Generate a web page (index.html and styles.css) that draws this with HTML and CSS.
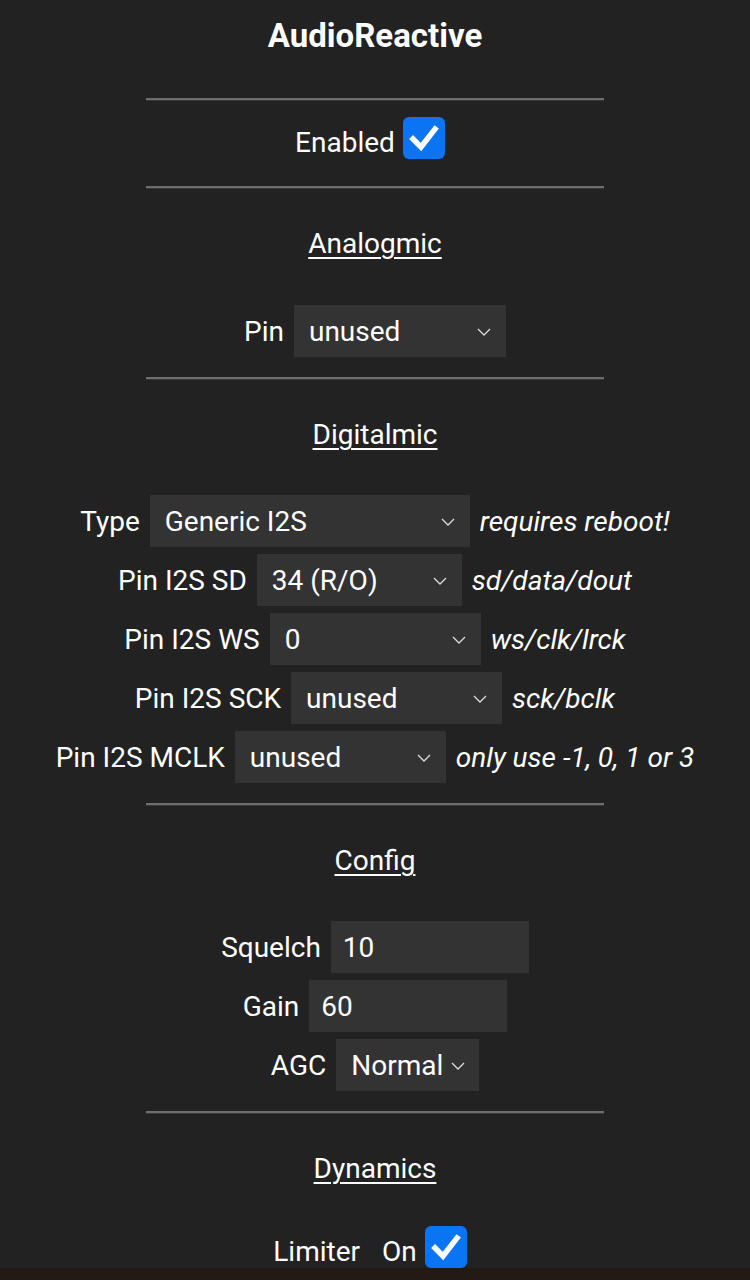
FILE: index.html
```html
<!DOCTYPE html>
<html>
<head>
<meta charset="utf-8">
<link rel="stylesheet" href="styles.css">
</head>
<body>
<div class="page">
  <h2 class="title">AudioReactive</h2>
  <hr class="sep">
  <div class="row row-check">
    <span class="label clabel">Enabled</span>
    <span class="check"><svg viewBox="0 0 42 42" width="42" height="42"><path d="M10 22 L18 30 L32 12" fill="none" stroke="#fff" stroke-width="5.5" stroke-linecap="square" stroke-linejoin="miter"/></svg></span>
  </div>
  <hr class="sep sep-after-check">
  <div class="sec"><u>Analogmic</u></div>
  <div class="rows rows-first">
    <div class="row">
      <span class="label">Pin</span>
      <span class="sel w212"><select><option>unused</option></select><svg class="chev" viewBox="0 0 14 8" width="14" height="8"><path d="M1 1 L7 7 L13 1" fill="none" stroke="#ddd" stroke-width="1.3"/></svg></span>
    </div>
  </div>
  <hr class="sep">
  <div class="sec"><u>Digitalmic</u></div>
  <div class="rows">
    <div class="row">
      <span class="label">Type</span>
      <span class="sel w320"><select><option>Generic I2S</option></select><svg class="chev" viewBox="0 0 14 8" width="14" height="8"><path d="M1 1 L7 7 L13 1" fill="none" stroke="#ddd" stroke-width="1.3"/></svg></span>
      <i class="note">requires reboot!</i>
    </div>
    <div class="row">
      <span class="label">Pin I2S SD</span>
      <span class="sel w205"><select><option>34 (R/O)</option></select><svg class="chev" viewBox="0 0 14 8" width="14" height="8"><path d="M1 1 L7 7 L13 1" fill="none" stroke="#ddd" stroke-width="1.3"/></svg></span>
      <i class="note">sd/data/dout</i>
    </div>
    <div class="row">
      <span class="label">Pin I2S WS</span>
      <span class="sel w211"><select><option>0</option></select><svg class="chev" viewBox="0 0 14 8" width="14" height="8"><path d="M1 1 L7 7 L13 1" fill="none" stroke="#ddd" stroke-width="1.3"/></svg></span>
      <i class="note">ws/clk/lrck</i>
    </div>
    <div class="row">
      <span class="label">Pin I2S SCK</span>
      <span class="sel w211"><select><option>unused</option></select><svg class="chev" viewBox="0 0 14 8" width="14" height="8"><path d="M1 1 L7 7 L13 1" fill="none" stroke="#ddd" stroke-width="1.3"/></svg></span>
      <i class="note">sck/bclk</i>
    </div>
    <div class="row">
      <span class="label">Pin I2S MCLK</span>
      <span class="sel w211"><select><option>unused</option></select><svg class="chev" viewBox="0 0 14 8" width="14" height="8"><path d="M1 1 L7 7 L13 1" fill="none" stroke="#ddd" stroke-width="1.3"/></svg></span>
      <i class="note">only use -1, 0, 1 or 3</i>
    </div>
  </div>
  <hr class="sep">
  <div class="sec"><u>Config</u></div>
  <div class="rows">
    <div class="row">
      <span class="label">Squelch</span>
      <input class="num" type="text" value="10">
    </div>
    <div class="row">
      <span class="label">Gain</span>
      <input class="num" type="text" value="60">
    </div>
    <div class="row">
      <span class="label">AGC</span>
      <span class="sel w143"><select><option>Normal</option></select><svg class="chev" viewBox="0 0 14 8" width="14" height="8"><path d="M1 1 L7 7 L13 1" fill="none" stroke="#ddd" stroke-width="1.3"/></svg></span>
    </div>
  </div>
  <hr class="sep">
  <div class="sec"><u>Dynamics</u></div>
  <div class="row row-check">
    <span class="label clabel">Limiter</span>
    <span class="label clabel on">On</span>
    <span class="check"><svg viewBox="0 0 42 42" width="42" height="42"><path d="M10 22 L18 30 L32 12" fill="none" stroke="#fff" stroke-width="5.5" stroke-linecap="square" stroke-linejoin="miter"/></svg></span>
  </div>
  <div class="footer-strip"></div>
</div>
</body>
</html>
```
FILE: styles.css
```css
html, body {
  margin: 0;
  padding: 0;
  background: #222222;
}
body {
  font-family: Roboto, "Noto Sans", "Liberation Sans", sans-serif;
  color: #ffffff;
  font-size: 28px;
  height: 1280px;
  overflow: hidden;
}
.page {
  display: flex;
  flex-direction: column;
  align-items: center;
}
.title {
  margin: 15px 0 0 0;
  font-size: 33px;
  line-height: 41px;
  font-weight: 700;
}
.sep {
  width: 458px;
  margin: 42px 0 0 0;
  border: none;
  border-top: 2px solid #6e6e6e;
  border-bottom: 1px solid #3a3a3a;
  height: 0;
}
.rows + .sep {
  margin-top: 20px;
}
.sep-after-check {
  margin-top: 27px;
}
.row {
  display: flex;
  align-items: center;
  justify-content: center;
  gap: 10px;
  height: 52px;
  white-space: nowrap;
}
.rows {
  display: flex;
  flex-direction: column;
  gap: 7px;
  margin-top: 42px;
}
.rows-first {
  margin-top: 43px;
}
.row-check {
  height: 42px;
  margin-top: 16px;
  gap: 8px;
}
.sec + .row-check {
  margin-top: 39px;
}
.label {
  line-height: 32px;
  margin-top: 2px;
}
.clabel {
  margin-top: 10px;
}
.on {
  margin-left: 14px;
}
.sec {
  margin-top: 37px;
  line-height: 36px;
  font-size: 28px;
}
.sec u {
  text-decoration-thickness: 2px;
  text-underline-offset: 4px;
}
.check {
  display: block;
  width: 42px;
  height: 42px;
  margin-right: 10px;
  border-radius: 6px;
  background: #0b74f2;
}
.check svg {
  display: block;
}
.sel {
  position: relative;
  display: block;
  height: 52px;
}
.sel select {
  -webkit-appearance: none;
  appearance: none;
  display: block;
  width: 100%;
  height: 52px;
  margin: 0;
  border: none;
  border-radius: 0;
  background: #333333;
  color: #ffffff;
  font-family: Roboto, "Noto Sans", "Liberation Sans", sans-serif;
  font-size: 28px;
  padding: 0 0 0 15px;
  outline: none;
}
.chev {
  position: absolute;
  right: 15px;
  top: 23px;
}
.w212 { width: 212px; }
.w320 { width: 320px; }
.w205 { width: 205px; }
.w211 { width: 211px; }
.w143 { width: 143px; }
.w143 .chev { right: 14px; }
.note {
  font-style: italic;
  line-height: 32px;
  margin-top: 2px;
}
.num {
  box-sizing: border-box;
  width: 198px;
  height: 52px;
  margin: 0;
  border: none;
  border-radius: 0;
  background: #333333;
  color: #ffffff;
  font-family: Roboto, "Noto Sans", "Liberation Sans", sans-serif;
  font-size: 28px;
  padding: 0 0 0 12px;
  outline: none;
}
.footer-strip {
  align-self: stretch;
  height: 40px;
  background: #231a16;
}
```
